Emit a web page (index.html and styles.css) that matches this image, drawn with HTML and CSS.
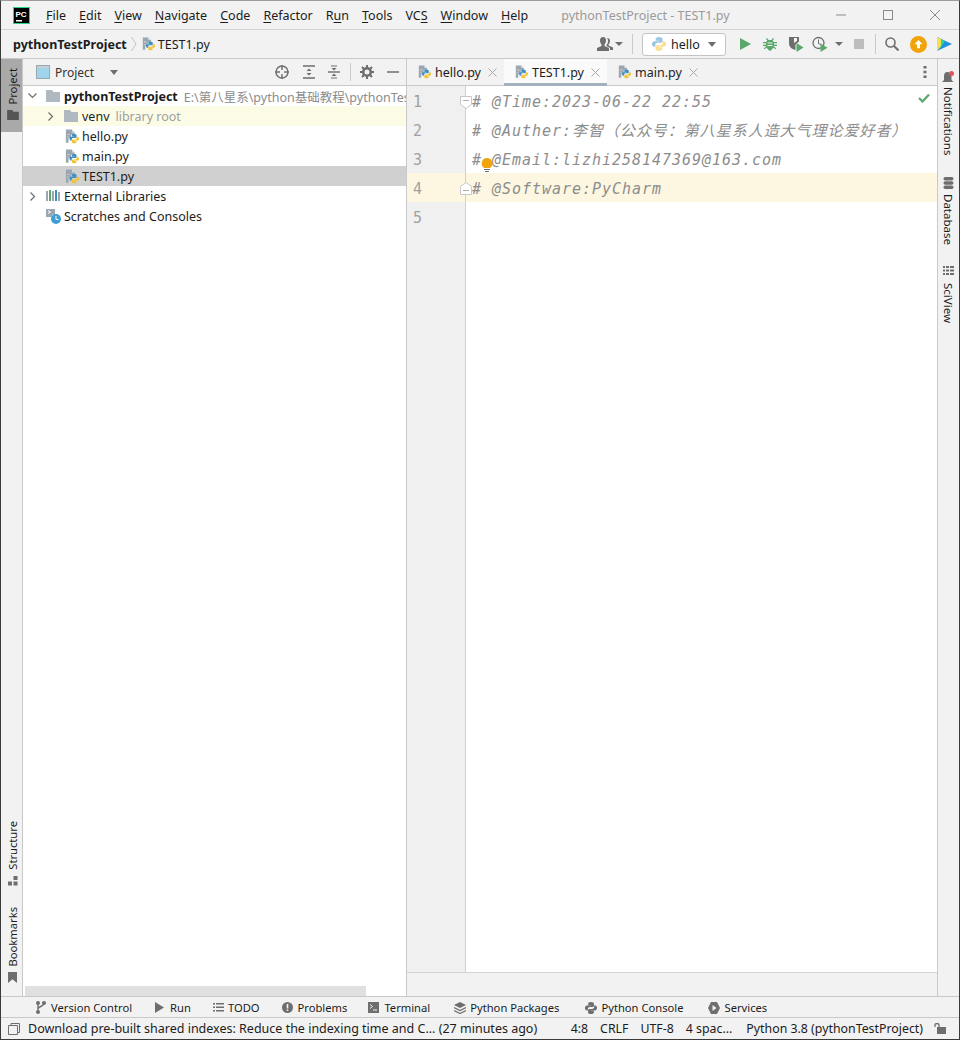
FILE: index.html
```html
<!DOCTYPE html>
<html lang="en">
<head>
    <meta charset="UTF-8">
    <title>pythonTestProject - TEST1.py</title>
    <link rel="stylesheet" href="styles.css">
</head>
<body>
<svg class="defs" width="0" height="0">
    <symbol id="logo" viewBox="0 0 16 16">
        <path d="M8 0C5 0 4.200 1.200 4.200 2.500v1.700h4v.6H2.500C1.100 4.800 0 6 0 8s1 3.200 2.300 3.200h1.500v-2c0-1.400 1.200-2.500 2.500-2.500h3.600c1.200 0 2.100-1 2.100-2.100V2.500C12 1.200 10.700 0 8 0z" fill="#3d8fc6"/>
        <path d="M12.200 4.800v2c0 1.400-1.200 2.500-2.500 2.500H6.100C4.900 9.300 4 10.300 4 11.400v2.100C4 14.800 5.300 16 8 16s3.800-1.200 3.800-2.500v-1.700h-4v-.6h5.700c1.400 0 2.500-1.200 2.500-3.200s-1-3.200-2.300-3.200z" fill="#f4c32c"/>
    </symbol>
    <symbol id="py" viewBox="0 0 16 16">
        <path d="M1 0h7v3h3v3H7v4H4v5H1z" fill="#9aa7b0"/>
        <path d="M8 0l3 3H8zM2.500 5h3v1h-3zM2.500 8h1.500v1H2.500z" fill="#cfd6db"/>
        <use href="#logo" x="5" y="5" width="11" height="11"/>
    </symbol>
    <symbol id="folder" viewBox="0 0 14 12">
        <path d="M0 0h6l1.500 2H14v10H0z" fill="#aeb9c0"/>
    </symbol>
</svg>

<div class="window">
    <header class="titlebar">
        <svg class="pc-logo" width="17" height="17" viewBox="0 0 17 17">
            <rect x=".5" y=".5" width="16" height="16" fill="#000" stroke="#21d789"/>
            <rect x="3" y="13" width="6" height="1.500" fill="#fff"/>
            <text x="2.500" y="10" class="pc-text">PC</text>
        </svg>
        <nav class="menu">
            <span><u>F</u>ile</span>
            <span><u>E</u>dit</span>
            <span><u>V</u>iew</span>
            <span><u>N</u>avigate</span>
            <span><u>C</u>ode</span>
            <span><u>R</u>efactor</span>
            <span>R<u>u</u>n</span>
            <span><u>T</u>ools</span>
            <span>VC<u>S</u></span>
            <span><u>W</u>indow</span>
            <span><u>H</u>elp</span>
        </nav>
        <div class="window-title">pythonTestProject - TEST1.py</div>
        <div class="window-buttons">
            <svg width="12" height="12" viewBox="0 0 12 12"><path d="M1 6h10" stroke="#8a8a8a"/></svg>
            <svg width="12" height="12" viewBox="0 0 12 12"><rect x="1.500" y="1.500" width="9" height="9" fill="none" stroke="#8a8a8a"/></svg>
            <svg width="12" height="12" viewBox="0 0 12 12"><path d="M1 1l10 10M11 1L1 11" stroke="#8a8a8a"/></svg>
        </div>
    </header>

    <div class="navbar">
        <b class="crumb-root">pythonTestProject</b>
        <svg class="crumb-sep" width="6" height="16" viewBox="0 0 6 16"><path d="M.5 1L5 8 .5 15" fill="none" stroke="#c4c4c4"/></svg>
        <svg width="13" height="14"><use href="#py"/></svg>
        <span class="crumb-file">TEST1.py</span>
        <div class="nav-tools">
            <svg width="16" height="14" viewBox="0 0 16 14"><path d="M6 0c2 0 3 1.500 3 3.500S8 7 7.500 7.500V9l4.500 2v3H0v-3l4.500-2V7.500C4 7 3 5.500 3 3.500S4 0 6 0z" fill="#6e6e6e"/><path d="M10 1c2 0 3 1.200 3 3s-1 3-1.500 3.500v1l4.500 2V13h-3v-2L9.500 9V8c.8-1 1.500-2 1.500-4 0-1-.2-2-1-3z" fill="#6e6e6e"/></svg>
            <i class="caret small"></i>
            <i class="vsep sep-a"></i>
            <div class="run-config">
                <svg class="pale" width="14" height="14"><use href="#logo"/></svg>
                <span>hello</span>
                <i class="caret"></i>
            </div>
            <svg class="t-run" width="11" height="12" viewBox="0 0 11 12"><path d="M0 0l11 6-11 6z" fill="#59a869"/></svg>
            <svg class="t-debug" width="14" height="14" viewBox="0 0 14 14"><path d="M4 1l1.500 2h3L10 1l1 .7-1.300 1.800c.5.400.8.900 1 1.500H14v1.200h-3v1.600h3V9h-3l-.1.400 2.300 1.800-.8 1-2-1.600C9.700 11.600 8 14 7 14s-2.700-2.400-3.400-3.400l-2 1.600-.8-1 2.300-1.800L3 9H0V7.800h3V6.200H0V5h3.300c.2-.6.500-1.100 1-1.500L3 1.700z" fill="#59a869"/><path d="M4.500 5.500h5v1h-5zM4.500 8h5v1h-5z" fill="#f2f2f2"/></svg>
            <svg class="t-cover" width="16" height="16" viewBox="0 0 16 16"><path d="M1 1h10v4.500l-3.500 3v5l-.5.500c-3-1-6-3-6-7z" fill="#6e6e6e"/><path d="M6 2h3v3L6 7z" fill="#f2f2f2"/><path d="M8.500 7l7 4.500-7 4.500z" fill="#59a869"/></svg>
            <svg class="t-profile" width="16" height="16" viewBox="0 0 16 16"><circle cx="6.500" cy="7" r="5.500" fill="none" stroke="#6e6e6e" stroke-width="1.300"/><path d="M6.500 3.500v4l2.500 1" fill="none" stroke="#6e6e6e"/><path d="M8.500 7.500l7 4.200-7 4.300z" fill="#59a869"/></svg>
            <i class="caret small t-caret"></i>
            <i class="stop"></i>
            <i class="vsep sep-b"></i>
            <svg width="14" height="14" viewBox="0 0 14 14"><circle cx="5.500" cy="5.500" r="4.500" fill="none" stroke="#6e6e6e" stroke-width="1.600"/><path d="M9 9l4.500 4.500" stroke="#6e6e6e" stroke-width="2"/></svg>
            <svg class="t-up" width="17" height="17" viewBox="0 0 17 17"><circle cx="8.500" cy="8.500" r="8.500" fill="#f0a30a"/><path d="M8.500 4l4 4.200H10v4H7v-4H4.500z" fill="#fff"/></svg>
            <svg class="t-brand" width="15" height="16" viewBox="0 0 15 16"><path d="M0 1l15 7-15 7z" fill="#1f8fe0"/><path d="M0 1l8 4-4 6-4 4z" fill="#2ed3a0"/><path d="M0 1l4 1.900V10l-4 5z" fill="#f4e04d"/></svg>
        </div>
    </div>

    <main class="workspace">
        <aside class="strip strip-left">
            <div class="strip-btn active">
                <span class="v-label flip">Project</span>
                <svg width="12" height="10" viewBox="0 0 14 12"><path d="M0 0h6l1.500 2H14v10H0z" fill="#555"/></svg>
            </div>
            <div class="strip-btn structure">
                <span class="v-label flip">Structure</span>
                <svg width="10" height="10" viewBox="0 0 10 10"><path d="M5.500 0h4v4h-4zM0 5.500h4v4H0zM5.500 5.500h4v4h-4z" fill="#6e6e6e"/></svg>
            </div>
            <div class="strip-btn bookmarks">
                <span class="v-label flip">Bookmarks</span>
                <svg width="9" height="11" viewBox="0 0 10 12"><path d="M0 0h10v12L5 8l-5 4z" fill="#6e6e6e"/></svg>
            </div>
        </aside>

        <section class="project-panel">
            <div class="panel-head">
                <svg width="14" height="14" viewBox="0 0 14 14"><rect x=".5" y=".5" width="13" height="13" fill="#9fd4ea" stroke="#9aa7b0"/><path d="M1 1h12v2H1z" fill="#c8d0d5"/></svg>
                <span class="panel-title">Project</span>
                <i class="caret"></i>
                <div class="panel-tools">
                    <svg width="14" height="14" viewBox="0 0 14 14"><circle cx="7" cy="7" r="6" fill="none" stroke="#6e6e6e" stroke-width="1.400"/><path d="M7 0v5M7 9v5M0 7h5M9 7h5" stroke="#6e6e6e" stroke-width="1.400"/></svg>
                    <svg width="14" height="14" viewBox="0 0 14 14"><path d="M1 1h12M1 13h12" stroke="#6e6e6e" stroke-width="1.400"/><path d="M7 3.500L9.500 6h-5zM7 10.500L4.500 8h5z" fill="#6e6e6e"/></svg>
                    <svg width="14" height="14" viewBox="0 0 14 14"><path d="M1 7h12" stroke="#6e6e6e" stroke-width="1.400"/><path d="M4 1h6M4 13h6" stroke="#6e6e6e"/><path d="M7 5.500L4.500 3h5zM7 8.500L9.500 11h-5z" fill="#6e6e6e"/></svg>
                    <i class="vsep"></i>
                    <svg width="14" height="14" viewBox="0 0 14 14"><circle cx="7" cy="7" r="3.800" fill="none" stroke="#6e6e6e" stroke-width="2.600"/><path d="M7 0v3M7 11v3M0 7h3M11 7h3M2 2l2 2M10 10l2 2M12 2l-2 2M2 12l2-2" stroke="#6e6e6e" stroke-width="2"/></svg>
                    <svg width="12" height="14" viewBox="0 0 12 14"><path d="M0 7h12" stroke="#6e6e6e" stroke-width="1.500"/></svg>
                </div>
            </div>
            <div class="tree">
                <div class="row">
                    <span class="arrow"><svg width="9" height="6" viewBox="0 0 9 6"><path d="M.5.500l4 4 4-4" fill="none" stroke="#6e6e6e" stroke-width="1.200"/></svg></span>
                    <svg class="node-ico" width="14" height="12"><use href="#folder"/></svg>
                    <b>pythonTestProject</b>
                    <span class="hint">E:\第八星系\python基础教程\pythonTest</span>
                </div>
                <div class="row lvl1 lib">
                    <span class="arrow"><svg class="closed" width="6" height="9" viewBox="0 0 6 9"><path d="M.5.500l4 4-4 4" fill="none" stroke="#6e6e6e" stroke-width="1.200"/></svg></span>
                    <svg class="node-ico" width="14" height="12"><use href="#folder"/></svg>
                    <span>venv</span>
                    <span class="hint lib-hint">library root</span>
                </div>
                <div class="row lvl1">
                    <span class="arrow"></span>
                    <svg class="node-ico file" width="14" height="15"><use href="#py"/></svg>
                    <span>hello.py</span>
                </div>
                <div class="row lvl1">
                    <span class="arrow"></span>
                    <svg class="node-ico file" width="14" height="15"><use href="#py"/></svg>
                    <span>main.py</span>
                </div>
                <div class="row lvl1 selected">
                    <span class="arrow"></span>
                    <svg class="node-ico file" width="14" height="15"><use href="#py"/></svg>
                    <span>TEST1.py</span>
                </div>
                <div class="row">
                    <span class="arrow"><svg class="closed" width="6" height="9" viewBox="0 0 6 9"><path d="M.5.500l4 4-4 4" fill="none" stroke="#6e6e6e" stroke-width="1.200"/></svg></span>
                    <svg class="node-ico" width="14" height="12" viewBox="0 0 14 12"><path d="M0 1h2v10H0z" fill="#9aa7b0"/><path d="M3 0h2v11H3z" fill="#59a869"/><path d="M6 1h2v10H6z" fill="#9aa7b0"/><path d="M9 0h2v11H9z" fill="#3d8fc6"/><path d="M12 2h2v9h-2z" fill="#9aa7b0"/></svg>
                    <span>External Libraries</span>
                </div>
                <div class="row">
                    <span class="arrow"></span>
                    <svg class="node-ico scratch" width="15" height="15" viewBox="0 0 15 15"><path d="M0 0h9v6H6v2H0z" fill="#9aa7b0"/><path d="M2 1.500L4.500 3 2 4.500" fill="none" stroke="#fff"/><circle cx="10" cy="10" r="5" fill="#3d9fd6"/><path d="M10 7v3.500h2.500" fill="none" stroke="#fff"/></svg>
                    <span>Scratches and Consoles</span>
                </div>
            </div>
            <div class="hscroll"><div class="hscroll-thumb"></div></div>
        </section>

        <section class="editor">
            <div class="tabs">
                <div class="tab">
                    <svg width="13" height="14"><use href="#py"/></svg>
                    <span>hello.py</span>
                    <svg class="tab-x" width="9" height="9" viewBox="0 0 9 9"><path d="M.5.500l8 8M8.500.500l-8 8" stroke="#a8a8a8"/></svg>
                </div>
                <div class="tab current">
                    <svg width="13" height="14"><use href="#py"/></svg>
                    <span>TEST1.py</span>
                    <svg class="tab-x" width="9" height="9" viewBox="0 0 9 9"><path d="M.5.500l8 8M8.500.500l-8 8" stroke="#a8a8a8"/></svg>
                </div>
                <div class="tab">
                    <svg width="13" height="14"><use href="#py"/></svg>
                    <span>main.py</span>
                    <svg class="tab-x" width="9" height="9" viewBox="0 0 9 9"><path d="M.5.500l8 8M8.500.500l-8 8" stroke="#a8a8a8"/></svg>
                </div>
                <svg class="kebab" width="4" height="14" viewBox="0 0 4 14"><path d="M.5 1h3v2.500h-3zM.5 5.800h3v2.500h-3zM.5 10.500h3V13h-3z" fill="#6e6e6e"/></svg>
            </div>
            <div class="code-area">
                <div class="gutter">
                    <div class="num">1</div>
                    <div class="num">2</div>
                    <div class="num">3</div>
                    <div class="num hl">4</div>
                    <div class="num">5</div>
                    <svg class="fold fold-top" width="12" height="13" viewBox="0 0 12 13"><path d="M.5.500h11v8L6 12.500.5 8.500z" fill="#fff" stroke="#c8c8c8"/><path d="M3 4.500h6" stroke="#b0b0b0"/></svg>
                    <svg class="fold fold-end" width="12" height="13" viewBox="0 0 12 13"><path d="M.5 12.500h11v-8L6 .5.500 4.500z" fill="#fff" stroke="#c8c8c8"/><path d="M3 8.500h6" stroke="#b0b0b0"/></svg>
                </div>
                <div class="code">
                    <div class="line"># @Time:2023-06-22 22:55</div>
                    <div class="line"># @Auther:李智（公众号：第八星系人造大气理论爱好者）</div>
                    <div class="line"># @Email:lizhi258147369@163.com</div>
                    <div class="line hl"># @Software:PyCharm</div>
                    <div class="line"></div>
                    <svg class="bulb" width="12" height="15" viewBox="0 0 12 15"><path d="M6 0a5.500 5.500 0 0 1 3 10H3A5.500 5.500 0 0 1 6 0z" fill="#f0a30a"/><path d="M3 11.500h6M4 13.500h4" stroke="#6e6e6e"/></svg>
                    <svg class="check" width="12" height="10" viewBox="0 0 12 10"><path d="M1 5l3.500 3.500L11 1.500" fill="none" stroke="#59a869" stroke-width="2.200"/></svg>
                </div>
            </div>
            <div class="crumbs-empty"></div>
        </section>

        <aside class="strip strip-right">
            <div class="strip-btn notif">
                <svg width="12" height="13" viewBox="0 0 12 13"><path d="M5 1c3 0 4.500 2 4.500 5v3l2 2H0l2-2V5c0-2 1-4 3-4z" fill="#6e6e6e"/><circle cx="9.500" cy="2.500" r="2.500" fill="#e05555"/></svg>
                <span class="v-label">Notifications</span>
            </div>
            <div class="strip-btn db">
                <svg width="11" height="12" viewBox="0 0 11 12"><rect x=".5" y="0" width="10" height="3.500" rx="1.700" fill="#6e6e6e"/><rect x=".5" y="4.200" width="10" height="3.500" rx="1.700" fill="#6e6e6e"/><rect x=".5" y="8.400" width="10" height="3.500" rx="1.700" fill="#6e6e6e"/></svg>
                <span class="v-label">Database</span>
            </div>
            <div class="strip-btn sci">
                <svg width="11" height="11" viewBox="0 0 11 11"><path d="M0 0h2v2H0zM3 0h3v2H3zM7 0h4v2H7zM0 3.500h2v2H0zM3 3.500h3v2H3zM7 3.500h4v2H7zM0 7h2v2H0zM3 7h3v2H3zM7 7h4v2H7z" fill="#6e6e6e"/></svg>
                <span class="v-label">SciView</span>
            </div>
        </aside>
    </main>

    <div class="toolstrip">
        <div class="tool">
            <svg width="10" height="13" viewBox="0 0 10 13"><circle cx="2" cy="2" r="2" fill="#6e6e6e"/><circle cx="8" cy="2" r="2" fill="#6e6e6e"/><circle cx="2" cy="11" r="2" fill="#6e6e6e"/><path d="M2 2v9M8 2c0 4-6 3-6 6" fill="none" stroke="#6e6e6e" stroke-width="1.400"/></svg>
            <span>Version Control</span>
        </div>
        <div class="tool">
            <svg width="9" height="11" viewBox="0 0 9 11"><path d="M0 0l9 5.500L0 11z" fill="#6e6e6e"/></svg>
            <span>Run</span>
        </div>
        <div class="tool">
            <svg width="11" height="9" viewBox="0 0 11 9"><path d="M0 0h2v1.500H0zM3 0h8v1.500H3zM0 3.500h2V5H0zM3 3.500h8V5H3zM0 7h2v1.500H0zM3 7h8v1.500H3z" fill="#6e6e6e"/></svg>
            <span>TODO</span>
        </div>
        <div class="tool">
            <svg width="11" height="11" viewBox="0 0 11 11"><circle cx="5.500" cy="5.500" r="5.500" fill="#6e6e6e"/><path d="M4.700 2h1.600v4.500H4.700zM4.700 7.500h1.600v1.600H4.700z" fill="#f2f2f2"/></svg>
            <span>Problems</span>
        </div>
        <div class="tool">
            <svg width="11" height="11" viewBox="0 0 11 11"><rect width="11" height="11" fill="#6e6e6e"/><path d="M2 2.500l2.500 2-2.500 2M5 8h4" fill="none" stroke="#f2f2f2"/></svg>
            <span>Terminal</span>
        </div>
        <div class="tool">
            <svg width="12" height="12" viewBox="0 0 12 12"><path d="M6 0l6 3-6 3-6-3z" fill="#6e6e6e"/><path d="M0 5.500l6 3 6-3M0 8.500l6 3 6-3" fill="none" stroke="#6e6e6e" stroke-width="1.200"/></svg>
            <span>Python Packages</span>
        </div>
        <div class="tool">
            <svg class="mono-logo" width="12" height="12" viewBox="0 0 16 16"><path d="M8 0C5 0 4.200 1.200 4.200 2.500v1.700h4v.6H2.500C1.100 4.800 0 6 0 8s1 3.200 2.300 3.200h1.500v-2c0-1.400 1.200-2.500 2.500-2.500h3.600c1.200 0 2.100-1 2.100-2.100V2.500C12 1.200 10.700 0 8 0z"/><path d="M12.200 4.800v2c0 1.400-1.200 2.500-2.500 2.500H6.100C4.900 9.300 4 10.300 4 11.400v2.100C4 14.800 5.300 16 8 16s3.800-1.200 3.800-2.500v-1.700h-4v-.6h5.700c1.400 0 2.500-1.200 2.500-3.200s-1-3.200-2.300-3.200z"/></svg>
            <span>Python Console</span>
        </div>
        <div class="tool">
            <svg width="12" height="12" viewBox="0 0 12 12"><path d="M3 0h6l3 6-3 6H3L0 6z" fill="#6e6e6e"/><path d="M4.500 3l4 3-4 3z" fill="#f2f2f2"/></svg>
            <span>Services</span>
        </div>
    </div>

    <footer class="statusbar">
        <svg width="12" height="12" viewBox="0 0 12 12"><path d="M.5 2.500h9v9h-9z" fill="none" stroke="#6e6e6e"/><path d="M3 2.500v-2h8.500v9h-2" fill="none" stroke="#6e6e6e"/></svg>
        <span class="st-msg">Download pre-built shared indexes: Reduce the indexing time and C... (27 minutes ago)</span>
        <span class="st-item st-first">4:8</span>
        <span class="st-item">CRLF</span>
        <span class="st-item">UTF-8</span>
        <span class="st-item">4 spac...</span>
        <span class="st-item st-py">Python 3.8 (pythonTestProject)</span>
        <svg class="st-lock" width="12" height="11" viewBox="0 0 12 11"><path d="M1 4V2c0-2 4-2 4 0v2" fill="none" stroke="#6e6e6e" stroke-width="1.300"/><rect x="3" y="4" width="9" height="7" fill="#6e6e6e"/></svg>
    </footer>
</div>
</body>
</html>
```

FILE: styles.css
```css
* {
    box-sizing: border-box;
}
html, body {
    margin: 0;
    padding: 0;
}
body {
    width: 960px;
    height: 1040px;
    overflow: hidden;
    font-family: "Noto Sans", "Noto Sans CJK SC", sans-serif;
    font-size: 12.5px;
    color: #1c1c1c;
}
i {
    display: block;
}
svg {
    display: block;
    flex: none;
}
.defs {
    position: absolute;
}
.window {
    width: 960px;
    height: 1040px;
    display: flex;
    flex-direction: column;
    background: #f2f2f2;
    border: 1px solid #3a3a3a;
    border-top-color: #9c9c9c;
}

/* title bar */
.titlebar {
    height: 29px;
    flex: none;
    display: flex;
    align-items: center;
    border-bottom: 1px solid #d4d4d4;
    padding-left: 12px;
}
.pc-text {
    font: bold 8px "Liberation Sans", sans-serif;
    fill: #fff;
}
.menu {
    display: flex;
    gap: 13px;
    margin-left: 16px;
}
.menu u {
    text-underline-offset: 2px;
}
.window-title {
    margin-left: 33px;
    color: #9a9a9a;
}
.window-buttons {
    margin-left: auto;
    display: flex;
    gap: 35px;
    padding-right: 18px;
}

/* navigation bar */
.navbar {
    height: 29px;
    flex: none;
    display: flex;
    align-items: center;
    padding-left: 12px;
    border-bottom: 1px solid #c9c9c9;
}
.crumb-sep {
    margin: 0 5px 0 4px;
}
.crumb-file {
    margin-left: 3px;
}
.nav-tools {
    margin-left: auto;
    display: flex;
    align-items: center;
}
.caret {
    width: 0;
    height: 0;
    border-left: 4.5px solid transparent;
    border-right: 4.5px solid transparent;
    border-top: 5px solid #6e6e6e;
}
.caret.small {
    border-left-width: 4px;
    border-right-width: 4px;
    border-top-width: 4px;
    margin-left: 2px;
}
.vsep {
    width: 1px;
    height: 20px;
    background: #c9c9c9;
}
.sep-a {
    margin: 0 9px;
}
.run-config {
    width: 84px;
    height: 23px;
    display: flex;
    align-items: center;
    background: #fff;
    border: 1px solid #c4c4c4;
    border-radius: 3px;
    padding-left: 9px;
}
.run-config span {
    margin-left: 5px;
}
.run-config .caret {
    margin-left: auto;
    margin-right: 9px;
}
.pale {
    opacity: .5;
}
.t-run {
    margin-left: 14px;
}
.t-debug {
    margin-left: 12px;
}
.t-cover {
    margin-left: 11px;
}
.t-profile {
    margin-left: 8px;
}
.caret.t-caret {
    margin-left: 7px;
}
.stop {
    width: 10px;
    height: 10px;
    background: #bdbdbd;
    margin-left: 11px;
}
.sep-b {
    margin: 0 9px 0 11px;
}
.t-up {
    margin-left: 11px;
}
.t-brand {
    margin: 0 7px 0 10px;
}

/* main area */
.workspace {
    flex: 1;
    min-height: 0;
    display: flex;
}
.strip {
    width: 22px;
    flex: none;
    display: flex;
    flex-direction: column;
    align-items: center;
    background: #f2f2f2;
}
.strip-left {
    border-right: 1px solid #c9c9c9;
}
.strip-right {
    border-left: 1px solid #c9c9c9;
}
.strip-btn {
    width: 100%;
    display: flex;
    flex-direction: column;
    align-items: center;
    gap: 6px;
}
.strip-left .strip-btn {
    padding-left: 2px;
}
.strip-right .strip-btn {
    padding-right: 1px;
}
.v-label {
    writing-mode: vertical-rl;
    line-height: 14px;
    font-size: 11.2px;
}
.strip-right .v-label {
    font-size: 11.5px;
}
.flip {
    transform: rotate(180deg);
}
.strip-btn.active {
    background: #a9a9a9;
    height: 73px;
    padding-top: 9px;
    gap: 5px;
}
.structure {
    margin-top: auto;
}
.bookmarks {
    margin-top: 21px;
    padding-bottom: 13px;
}
.notif {
    padding-top: 12px;
}
.notif.strip-btn {
    gap: 3px;
}
.db {
    margin-top: 22px;
}
.db.strip-btn {
    gap: 5px;
}
.sci {
    margin-top: 21px;
}
.sci.strip-btn {
    gap: 6px;
}

/* project panel */
.project-panel {
    width: 384px;
    flex: none;
    display: flex;
    flex-direction: column;
    background: #fff;
    border-right: 1px solid #c9c9c9;
}
.panel-head {
    height: 27px;
    flex: none;
    display: flex;
    align-items: center;
    background: #f2f2f2;
    border-bottom: 1px solid #c9c9c9;
    padding-left: 13px;
}
.panel-title {
    margin-left: 5px;
    font-size: 12px;
    color: #333;
}
.panel-head .caret {
    margin-left: 16px;
}
.panel-tools {
    margin-left: auto;
    display: flex;
    align-items: center;
    padding-right: 7px;
}
.panel-tools > :nth-child(2) {
    margin-left: 13px;
}
.panel-tools > :nth-child(3) {
    margin-left: 11px;
}
.panel-tools .vsep {
    height: 18px;
    margin: 0 9px;
}
.panel-tools > :nth-child(6) {
    margin-left: 13px;
}
.tree {
    flex: 1;
}
.row {
    height: 20px;
    display: flex;
    align-items: center;
    padding-left: 5px;
    white-space: nowrap;
    overflow: hidden;
}
.lvl1 {
    padding-left: 23px;
}
.arrow {
    width: 18px;
    flex: none;
}
.arrow .closed {
    margin-left: 2px;
}
.node-ico {
    margin-right: 4px;
}
.node-ico.scratch {
    margin-right: 3px;
}
.node-ico.file {
    margin: 0 3px 0 1px;
}
.hint {
    margin-left: 6px;
    color: #8c8c8c;
}
.lib {
    background: #fcfce6;
}
.hint.lib-hint {
    color: #a0a0a0;
}
.selected {
    background: #d0d0d0;
}
.hscroll {
    height: 10px;
    flex: none;
    padding-left: 2px;
}
.hscroll-thumb {
    width: 341px;
    height: 10px;
    background: #e0e0e0;
}

/* editor */
.editor {
    flex: 1;
    min-width: 0;
    display: flex;
    flex-direction: column;
}
.tabs {
    height: 27px;
    flex: none;
    display: flex;
    border-bottom: 1px solid #c9c9c9;
}
.tab {
    height: 26px;
    display: flex;
    align-items: center;
    padding: 0 7px 0 11px;
}
.tab span {
    margin-left: 4px;
}
.tab-x {
    margin-left: 7px;
}
.tab.current {
    height: 27px;
    background: #fafafa;
    border-bottom: 3px solid #a3b1c0;
    padding-top: 2px;
}
.kebab {
    margin: 6px 10px 0 auto;
}
.code-area {
    flex: 1;
    min-height: 0;
    display: flex;
    background: #fff;
}
.gutter {
    width: 59px;
    flex: none;
    position: relative;
    z-index: 1;
    background: #f0f0f0;
    border-right: 1px solid #d0d0d0;
}
.num, .line {
    height: 29px;
    line-height: 33px;
    font-family: "DejaVu Sans Mono", "Noto Sans CJK SC", monospace;
    font-size: 15px;
}
.num {
    padding-left: 6px;
    color: #a0a0a0;
}
.hl {
    background: #fdf7e2;
}
.fold {
    position: absolute;
    left: 53px;
}
.fold-top {
    top: 10px;
}
.fold-end {
    top: 96px;
}
.code {
    flex: 1;
    position: relative;
}
.line {
    padding-left: 6px;
    font-style: italic;
    letter-spacing: .97px;
    color: #8c8c8c;
    white-space: pre;
}
.bulb {
    position: absolute;
    left: 15px;
    top: 72px;
}
.check {
    position: absolute;
    right: 7px;
    top: 7px;
}
.crumbs-empty {
    height: 24px;
    flex: none;
    background: #f2f2f2;
    border-top: 1px solid #d4d4d4;
}

/* bottom bars */
.toolstrip {
    height: 22px;
    flex: none;
    display: flex;
    align-items: center;
    padding: 1px 0 0 35px;
    font-size: 11.2px;
    border-top: 1px solid #c9c9c9;
    border-bottom: 1px solid #c9c9c9;
}
.tool {
    display: flex;
    align-items: center;
    gap: 5px;
}
.tool:nth-child(2) {
    margin-left: 23px;
    gap: 6px;
}
.tool:nth-child(3) {
    margin-left: 22px;
    gap: 4px;
}
.tool:nth-child(4) {
    margin-left: 22px;
}
.tool:nth-child(5) {
    margin-left: 21px;
}
.tool:nth-child(6) {
    margin-left: 24px;
    gap: 4px;
}
.tool:nth-child(7) {
    margin-left: 26px;
    gap: 4px;
}
.tool:nth-child(8) {
    margin-left: 24px;
}
.mono-logo {
    fill: #6e6e6e;
}
.statusbar {
    height: 21px;
    flex: none;
    display: flex;
    align-items: center;
    padding-left: 7px;
}
.st-msg {
    margin-left: 8px;
}
.st-item {
    margin-left: 12px;
    font-size: 12.35px;
}
.st-first {
    margin-left: auto;
}
.st-py {
    margin-left: 14px;
}
.st-lock {
    margin: 0 13px 0 11px;
}
```
